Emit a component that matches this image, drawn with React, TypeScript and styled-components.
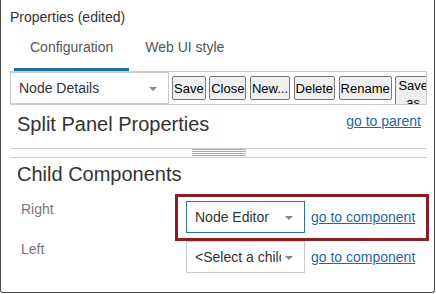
import React from "react";
import styled, { createGlobalStyle } from "styled-components";

const GlobalStyle = createGlobalStyle`
  body {
    margin: 0;
    background: #fff;
    font-family: "Liberation Sans", Arial, sans-serif;
  }
`;

const Panel = styled.div`
  box-sizing: border-box;
  width: 435px;
  height: 293px;
  padding: 0 7px 0 9px;
  border: 1px solid #4a4a4a;
  border-top: none;
  border-radius: 0 0 3px 3px;
  overflow: hidden;
  background: #fff;
`;

const PanelTitle = styled.div`
  padding-top: 9px;
  font-size: 14px;
  line-height: 16px;
  color: #333;
`;

const TabBar = styled.div`
  display: flex;
  margin: 1px 0 0 4px;
`;

const Tab = styled.div<{ $active?: boolean }>`
  padding: 13px 16px 13px;
  font-size: 14px;
  line-height: 16px;
  color: #555;
  border-bottom: 3px solid ${(p) => (p.$active ? "#1f6ea9" : "transparent")};
`;

const Toolbar = styled.div`
  display: flex;
  align-items: flex-start;
  height: 32px;
  border-top: 1px solid #ccc;
  border-bottom: 1px solid #ccc;
  border-right: 1px solid #ccc;
  overflow: hidden;
`;

const Dropdown = styled.div<{ $width: number; $focused?: boolean }>`
  box-sizing: border-box;
  display: flex;
  align-items: center;
  gap: 4px;
  flex-shrink: 0;
  width: ${(p) => p.$width}px;
  height: 32px;
  padding: 0 11px 0 8px;
  border: 1px solid ${(p) => (p.$focused ? "#2a72a8" : "#ccc")};
  background: #fff;
  font-size: 14px;
  color: #333;
`;

const DropdownValue = styled.span`
  flex: 1;
  min-width: 0;
  overflow: hidden;
  white-space: nowrap;
`;

const Caret = styled.span`
  width: 0;
  height: 0;
  margin-top: 2px;
  border-left: 4px solid transparent;
  border-right: 4px solid transparent;
  border-top: 4px solid #888;
`;

const ToolButton = styled.button<{ $wrap?: boolean }>`
  box-sizing: border-box;
  flex-shrink: 0;
  margin: 4px 0 0 3.5px;
  padding: 0 1px;
  ${(p) => (p.$wrap ? "width: 36px; line-height: 17px;" : "height: 24px; line-height: 15px;")}
  border: 1px solid #7a7a7a;
  border-radius: 2px;
  background: #efefef;
  font-family: "Liberation Sans", Arial, sans-serif;
  font-size: 13px;
  color: #000;
  text-align: center;
  &:first-of-type {
    margin-left: 3px;
  }
`;

const Section = styled.div`
  padding: 8px 6px 0 7px;
`;

const SectionHead = styled.div`
  display: flex;
  justify-content: space-between;
  align-items: flex-start;
`;

const Heading = styled.div`
  font-size: 20px;
  line-height: 23px;
  color: #333;
`;

const TextLink = styled.a`
  font-size: 14px;
  line-height: 16px;
  color: #1b6aa5;
  text-decoration: underline;
  white-space: nowrap;
`;

const PropsSection = styled(Section)`
  height: 44px;
  box-sizing: border-box;
  border-bottom: 1px solid #ccc;
`;

const Splitter = styled.div`
  display: flex;
  justify-content: center;
  height: 8px;
  border-bottom: 1px solid #ccc;
`;

const Grip = styled.div`
  width: 54px;
  height: 7px;
  background: repeating-linear-gradient(
    to bottom,
    #aaa 0,
    #aaa 1px,
    transparent 1px,
    transparent 2px
  );
`;

const ChildSection = styled(Section)`
  padding-top: 5px;
`;

const FieldList = styled.div`
  display: grid;
  grid-template-columns: 165px auto;
  row-gap: 8px;
  margin-top: 15px;
  padding-left: 4px;
  align-items: start;
`;

const FieldLabel = styled.div`
  font-size: 14px;
  line-height: 16px;
  color: #777;
`;

const FieldControl = styled.div<{ $highlighted?: boolean }>`
  position: relative;
  display: flex;
  align-items: center;
  gap: 6px;
  &::after {
    content: "";
    display: ${(p) => (p.$highlighted ? "block" : "none")};
    position: absolute;
    top: -7px;
    right: -8px;
    bottom: -8px;
    left: -11px;
    border: 3px solid #8c1d25;
    pointer-events: none;
  }
`;

const buttons = ["Save", "Close", "New...", "Delete", "Rename"];

const children = [
  { label: "Right", value: "Node Editor", focused: true },
  { label: "Left", value: "<Select a child>", focused: false },
];

export default function App() {
  return (
    <>
      <GlobalStyle />
      <Panel>
        <PanelTitle>Properties (edited)</PanelTitle>
        <TabBar>
          <Tab $active>Configuration</Tab>
          <Tab>Web UI style</Tab>
        </TabBar>
        <Toolbar>
          <Dropdown $width={159}>
            <DropdownValue>Node Details</DropdownValue>
            <Caret />
          </Dropdown>
          {buttons.map((b) => (
            <ToolButton key={b}>{b}</ToolButton>
          ))}
          <ToolButton $wrap>Save as</ToolButton>
        </Toolbar>
        <PropsSection>
          <SectionHead>
            <Heading>Split Panel Properties</Heading>
            <TextLink href="#">go to parent</TextLink>
          </SectionHead>
        </PropsSection>
        <Splitter>
          <Grip />
        </Splitter>
        <ChildSection>
          <Heading>Child Components</Heading>
          <FieldList>
            {children.map((c) => (
              <React.Fragment key={c.label}>
                <FieldLabel>{c.label}</FieldLabel>
                <FieldControl $highlighted={c.focused}>
                  <Dropdown $width={119} $focused={c.focused}>
                    <DropdownValue>{c.value}</DropdownValue>
                    <Caret />
                  </Dropdown>
                  <TextLink href="#">go to component</TextLink>
                </FieldControl>
              </React.Fragment>
            ))}
          </FieldList>
        </ChildSection>
      </Panel>
    </>
  );
}
